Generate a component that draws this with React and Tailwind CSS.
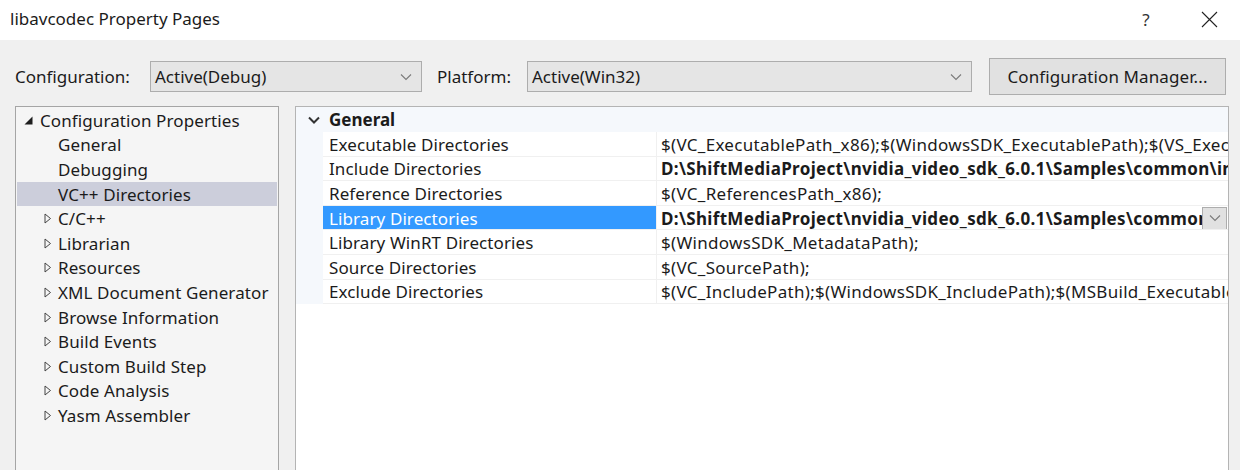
import React from "react";

const Chevron = ({ className = "" }) => (
  <svg width="12" height="8" viewBox="0 0 12 8" className={className}>
    <path d="M1 1.5 L6 6.5 L11 1.5" fill="none" stroke="#7a7a7a" strokeWidth="1.1" />
  </svg>
);

const Collapsed = () => (
  <svg width="8" height="11" viewBox="0 0 8 11" className="shrink-0">
    <path d="M1 1 L6.5 5.5 L1 10 Z" fill="none" stroke="#444" strokeWidth="1" />
  </svg>
);

const Expanded = () => (
  <svg width="9" height="9" viewBox="0 0 9 9" className="shrink-0">
    <path d="M8.5 0.5 L8.5 8.5 L0.5 8.5 Z" fill="#1e1e1e" />
  </svg>
);

const tree = [
  { label: "Configuration Properties", level: 0, expanded: true },
  { label: "General", level: 1 },
  { label: "Debugging", level: 1 },
  { label: "VC++ Directories", level: 1, selected: true },
  { label: "C/C++", level: 1, collapsed: true },
  { label: "Librarian", level: 1, collapsed: true },
  { label: "Resources", level: 1, collapsed: true },
  { label: "XML Document Generator", level: 1, collapsed: true },
  { label: "Browse Information", level: 1, collapsed: true },
  { label: "Build Events", level: 1, collapsed: true },
  { label: "Custom Build Step", level: 1, collapsed: true },
  { label: "Code Analysis", level: 1, collapsed: true },
  { label: "Yasm Assembler", level: 1, collapsed: true },
];

const props = [
  { name: "Executable Directories", value: "$(VC_ExecutablePath_x86);$(WindowsSDK_ExecutablePath);$(VS_ExecutablePath);$(MSBuild_ExecutablePath);$(SystemRoot)" },
  { name: "Include Directories", value: "D:\\ShiftMediaProject\\nvidia_video_sdk_6.0.1\\Samples\\common\\inc;$(VC_IncludePath)", bold: true },
  { name: "Reference Directories", value: "$(VC_ReferencesPath_x86);" },
  { name: "Library Directories", value: "D:\\ShiftMediaProject\\nvidia_video_sdk_6.0.1\\Samples\\common\\lib;$(LibraryPath)", bold: true, selected: true },
  { name: "Library WinRT Directories", value: "$(WindowsSDK_MetadataPath);" },
  { name: "Source Directories", value: "$(VC_SourcePath);" },
  { name: "Exclude Directories", value: "$(VC_IncludePath);$(WindowsSDK_IncludePath);$(MSBuild_ExecutablePath);$(VC_LibraryPath_x86)" },
];

export default function App() {
  return (
    <div
      className="w-[1240px] h-[470px] overflow-hidden bg-[#f0f0f0] text-[#1b1b1b] text-[17px] leading-none"
      style={{ fontFamily: '"Noto Sans", "Open Sans", sans-serif' }}
    >
      {/* Title bar */}
      <div className="h-[40px] bg-white flex items-center pl-[10px]">
        <span className="text-[17px] -mt-[4px]">libavcodec Property Pages</span>
        <div className="ml-auto flex items-center">
          <span className="text-[17px] text-[#333] w-[20px] text-center mr-[45px] -mt-[2px]">?</span>
          <svg width="17" height="17" viewBox="0 0 17 17" className="mr-[22px] -mt-[2px]">
            <path d="M1 1 L16 16 M16 1 L1 16" stroke="#222" strokeWidth="1.1" />
          </svg>
        </div>
      </div>

      {/* Toolbar */}
      <div className="h-[66px] flex items-center pl-[15px] pt-[7px]">
        <span className="w-[135px] -mt-[1px]">Configuration:</span>
        <div className="w-[272px] h-[31px] bg-[#e5e5e5] border border-[#adadad] flex items-center pl-[4px] pr-[9px]">
          <span>Active(Debug)</span>
          <Chevron className="ml-auto" />
        </div>
        <span className="ml-[15px] w-[90px]">Platform:</span>
        <div className="w-[445px] h-[31px] bg-[#e5e5e5] border border-[#adadad] flex items-center pl-[4px] pr-[9px]">
          <span>Active(Win32)</span>
          <Chevron className="ml-auto" />
        </div>
        <div className="ml-[17px] w-[237px] h-[37px] bg-[#e1e1e1] border border-[#adadad] flex items-center justify-center tracking-[0.1px]">
          Configuration Manager...
        </div>
      </div>

      {/* Main */}
      <div className="flex pl-[15px] h-[400px]">
        {/* Tree */}
        <div className="w-[264px] h-full bg-[#f5f5f5] border border-[#a5a5a5] border-b-0 pt-[1px] pl-[1px] pr-[1px]">
          {tree.map((t, i) => (
            <div
              key={i}
              className={`h-[24.6px] flex items-center ${t.selected ? "bg-[#cccedb]" : ""}`}
            >
              {t.level === 0 ? (
                <div className="flex items-center pl-[7px]">
                  <Expanded />
                  <span className="ml-[7px] tracking-[0.1px]">{t.label}</span>
                </div>
              ) : (
                <div className="flex items-center pl-[27px]">
                  <span className="w-[14px] flex items-center">{t.collapsed ? <Collapsed /> : null}</span>
                  <span className="whitespace-nowrap tracking-[0.1px]">{t.label}</span>
                </div>
              )}
            </div>
          ))}
        </div>

        {/* Property grid */}
        <div className="ml-[16px] w-[934px] h-full bg-white border border-[#b4b4b4] border-b-0 overflow-hidden">
          <div className="h-[25px] bg-[#f5f8fc] flex items-center">
            <span className="w-[33px] flex justify-center pl-[2px]">
              <svg width="12" height="8" viewBox="0 0 12 8">
                <path d="M1 1.5 L6 6.5 L11 1.5" fill="none" stroke="#333" strokeWidth="2" />
              </svg>
            </span>
            <span className="font-bold">General</span>
          </div>
          {props.map((p, i) => (
            <div key={i} className="h-[24.6px] flex">
              <div className="w-[27px] bg-[#f5f8fc] shrink-0" />
              <div
                className={`w-[334px] shrink-0 flex items-center pl-[6px] pt-[1px] border-b border-r border-[#f0f0f0] ${
                  p.selected ? "bg-[#3399ff] text-white" : ""
                }`}
              >
                <span className="whitespace-nowrap tracking-[0.1px]">{p.name}</span>
              </div>
              <div className="flex-1 min-w-0 flex items-center pl-[4px] pt-[1px] border-b border-[#f0f0f0] relative overflow-hidden">
                <span
                  className={`whitespace-nowrap ${p.bold ? "font-bold tracking-[0.33px]" : "tracking-[0.3px]"}`}
                >
                  {p.value}
                </span>
                {p.selected && (
                  <div className="absolute right-[1px] top-[1px] w-[25px] h-[23px] bg-[#e1e1e1] border border-[#adadad] flex items-center justify-center">
                    <Chevron />
                  </div>
                )}
              </div>
            </div>
          ))}
        </div>
      </div>
    </div>
  );
}
